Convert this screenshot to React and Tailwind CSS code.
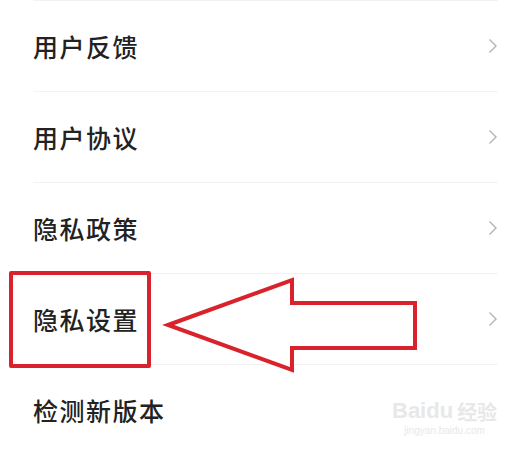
const ITEMS = ["用户反馈", "用户协议", "隐私政策", "隐私设置", "检测新版本"];

function Chevron() {
  return (
    <svg width="10" height="16" viewBox="0 0 10 16" className="shrink-0">
      <path d="M1.5 1.5 L8 8 L1.5 14.5" fill="none" stroke="#b3b3b3" strokeWidth="1.4" />
    </svg>
  );
}

export default function App() {
  return (
    <div
      className="relative w-[512px] h-[452px] overflow-hidden bg-white"
      style={{ fontFamily: '"Noto Sans CJK SC", "Noto Sans", sans-serif' }}
    >
      <div className="mx-[33px] mr-[14px] border-t border-[#f2f2f2]">
        {ITEMS.map((label, i) => (
          <div
            key={label}
            className="flex items-center justify-between h-[91px] border-b border-[#f2f2f2]"
          >
            <span className="text-[25px] leading-none font-medium text-[#222] tracking-[1.5px]">{label}</span>
            {i < 4 && <Chevron />}
          </div>
        ))}
      </div>

      {/* red highlight box */}
      <div className="absolute left-[9px] top-[271px] w-[142px] h-[97px] border-[4px] border-[#d9222c] rounded-[2px]" />

      {/* red arrow */}
      <svg className="absolute left-0 top-0" width="512" height="452">
        <polygon
          points="168,325 292,280 292,303 415,303 415,348 292,348 292,370"
          fill="white"
          stroke="#d9222c"
          strokeWidth="4"
          strokeLinejoin="miter"
        />
      </svg>

      {/* watermark */}
      <div className="absolute left-[392px] top-[400px] flex flex-col items-center text-[#e8e8e8]">
        <div className="flex items-end leading-none">
          <span className="text-[22px] font-bold" style={{ fontFamily: '"Liberation Sans", sans-serif' }}>
            Baidu
          </span>
          <span className="text-[20px] ml-1 font-bold">经验</span>
        </div>
        <span className="text-[10px] leading-none mt-1" style={{ fontFamily: '"Liberation Sans", sans-serif' }}>
          jingyan.baidu.com
        </span>
      </div>
    </div>
  );
}
